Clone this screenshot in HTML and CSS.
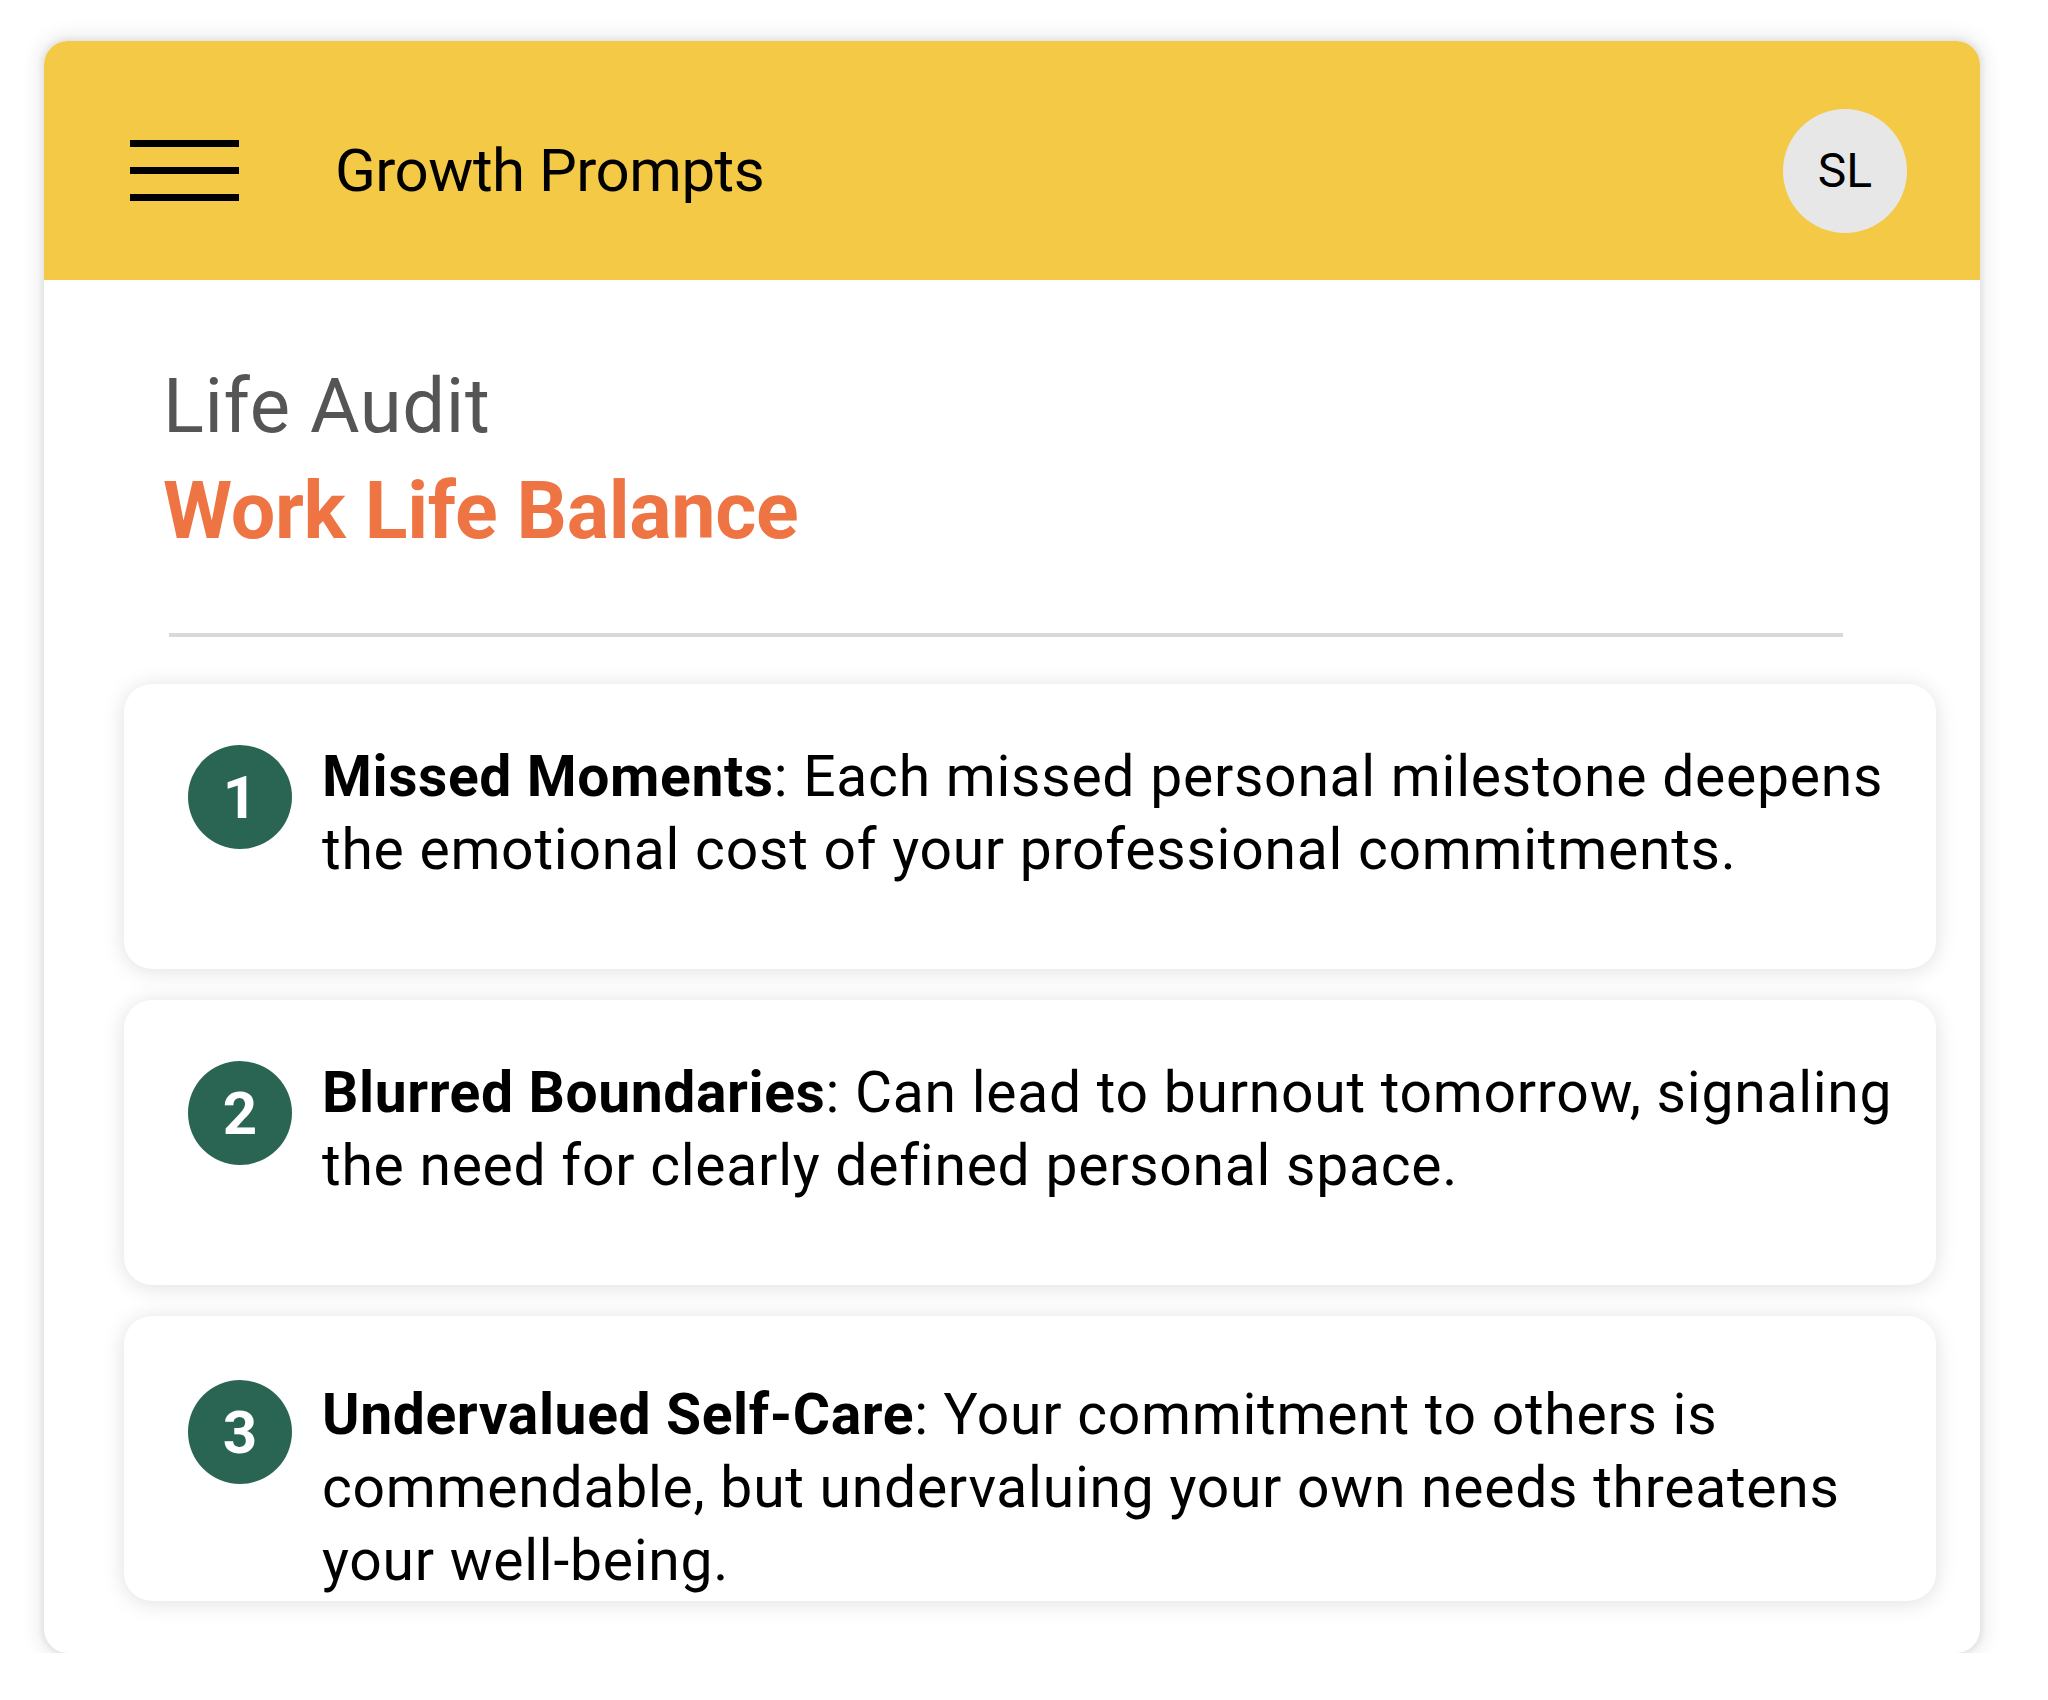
FILE: index.html
```html
<!DOCTYPE html>
<html lang="en">
<head>
<meta charset="utf-8">
<title>Growth Prompts</title>
<link rel="stylesheet" href="styles.css">
</head>
<body>
<div class="frame">
  <header class="header">
    <div class="menu" aria-label="Menu">
      <span class="bar"></span>
      <span class="bar"></span>
      <span class="bar"></span>
    </div>
    <div class="app-title">Growth Prompts</div>
    <div class="avatar">SL</div>
  </header>
  <section class="intro">
    <div class="kicker">Life Audit</div>
    <h1 class="topic">Work Life Balance</h1>
  </section>
  <hr class="divider">
  <div class="cards">
    <div class="card">
      <div class="num">1</div>
      <p class="text"><b>Missed Moments</b>: Each missed personal milestone deepens the emotional cost of your professional commitments.</p>
    </div>
    <div class="card">
      <div class="num">2</div>
      <p class="text"><b>Blurred Boundaries</b>: Can lead to burnout tomorrow, signaling the need for clearly defined personal space.</p>
    </div>
    <div class="card card-low">
      <div class="num">3</div>
      <p class="text"><b>Undervalued Self-Care</b>: Your commitment to others is commendable, but undervaluing your own needs threatens your well-being.</p>
    </div>
  </div>
</div>
</body>
</html>
```
FILE: styles.css
```css
html, body {
  margin: 0;
  padding: 0;
  background: #ffffff;
}
body {
  font-family: Roboto, "Liberation Sans", sans-serif;
  color: #000;
}
.frame {
  margin: 41px 0 0 44px;
  width: 1936px;
  height: 1612px;
  box-sizing: border-box;
  background: #fff;
  border-radius: 24px;
  overflow: hidden;
  box-shadow: 0 0 0 1px #e6e6e6, 0 0 4px 4px rgba(0,0,0,0.05), 0 0 16px 10px rgba(0,0,0,0.05);
}
.header {
  height: 239px;
  box-sizing: border-box;
  background: #f3c946;
  display: flex;
  align-items: center;
  padding: 20px 73px 0 86px;
}
.menu {
  width: 109px;
  display: flex;
  flex-direction: column;
  gap: 20px;
}
.bar {
  display: block;
  height: 7px;
  background: #000;
}
.app-title {
  margin-left: 96px;
  font-size: 60px;
  letter-spacing: -0.5px;
}
.avatar {
  margin-left: auto;
  width: 124px;
  height: 124px;
  border-radius: 50%;
  background: #e7e7e7;
  display: flex;
  align-items: center;
  justify-content: center;
  font-size: 48px;
}
.intro {
  padding: 76px 0 0 119px;
}
.kicker {
  font-size: 76px;
  line-height: 100px;
  color: #555555;
  letter-spacing: 0.6px;
}
.topic {
  margin: 5px 0 0;
  font-size: 79px;
  line-height: 100px;
  font-weight: 700;
  color: #ee7443;
  letter-spacing: -0.3px;
}
.divider {
  margin: 72px 137px 0 125px;
  border: 0;
  height: 4px;
  background: #d9d9d9;
}
.cards {
  margin: 47px 44px 0 80px;
  display: flex;
  flex-direction: column;
  gap: 31px;
}
.card {
  height: 285px;
  box-sizing: border-box;
  background: #fff;
  border-radius: 28px;
  box-shadow: 0 2px 22px rgba(0,0,0,0.13);
  display: flex;
  align-items: flex-start;
  padding: 56px 20px 0 64px;
  overflow: hidden;
}
.card-low {
  padding-top: 62px;
}
.card-low .num {
  margin-top: 2px;
}
.num {
  flex: none;
  width: 104px;
  height: 104px;
  margin-top: 5px;
  border-radius: 50%;
  background: #2a6553;
  color: #fff;
  font-weight: 700;
  font-size: 60px;
  display: flex;
  align-items: center;
  justify-content: center;
}
.text {
  margin: 0 0 0 30px;
  font-size: 57px;
  line-height: 73px;
  letter-spacing: 0.75px;
}
.text b {
  font-weight: 700;
  letter-spacing: 0.6px;
}
```
